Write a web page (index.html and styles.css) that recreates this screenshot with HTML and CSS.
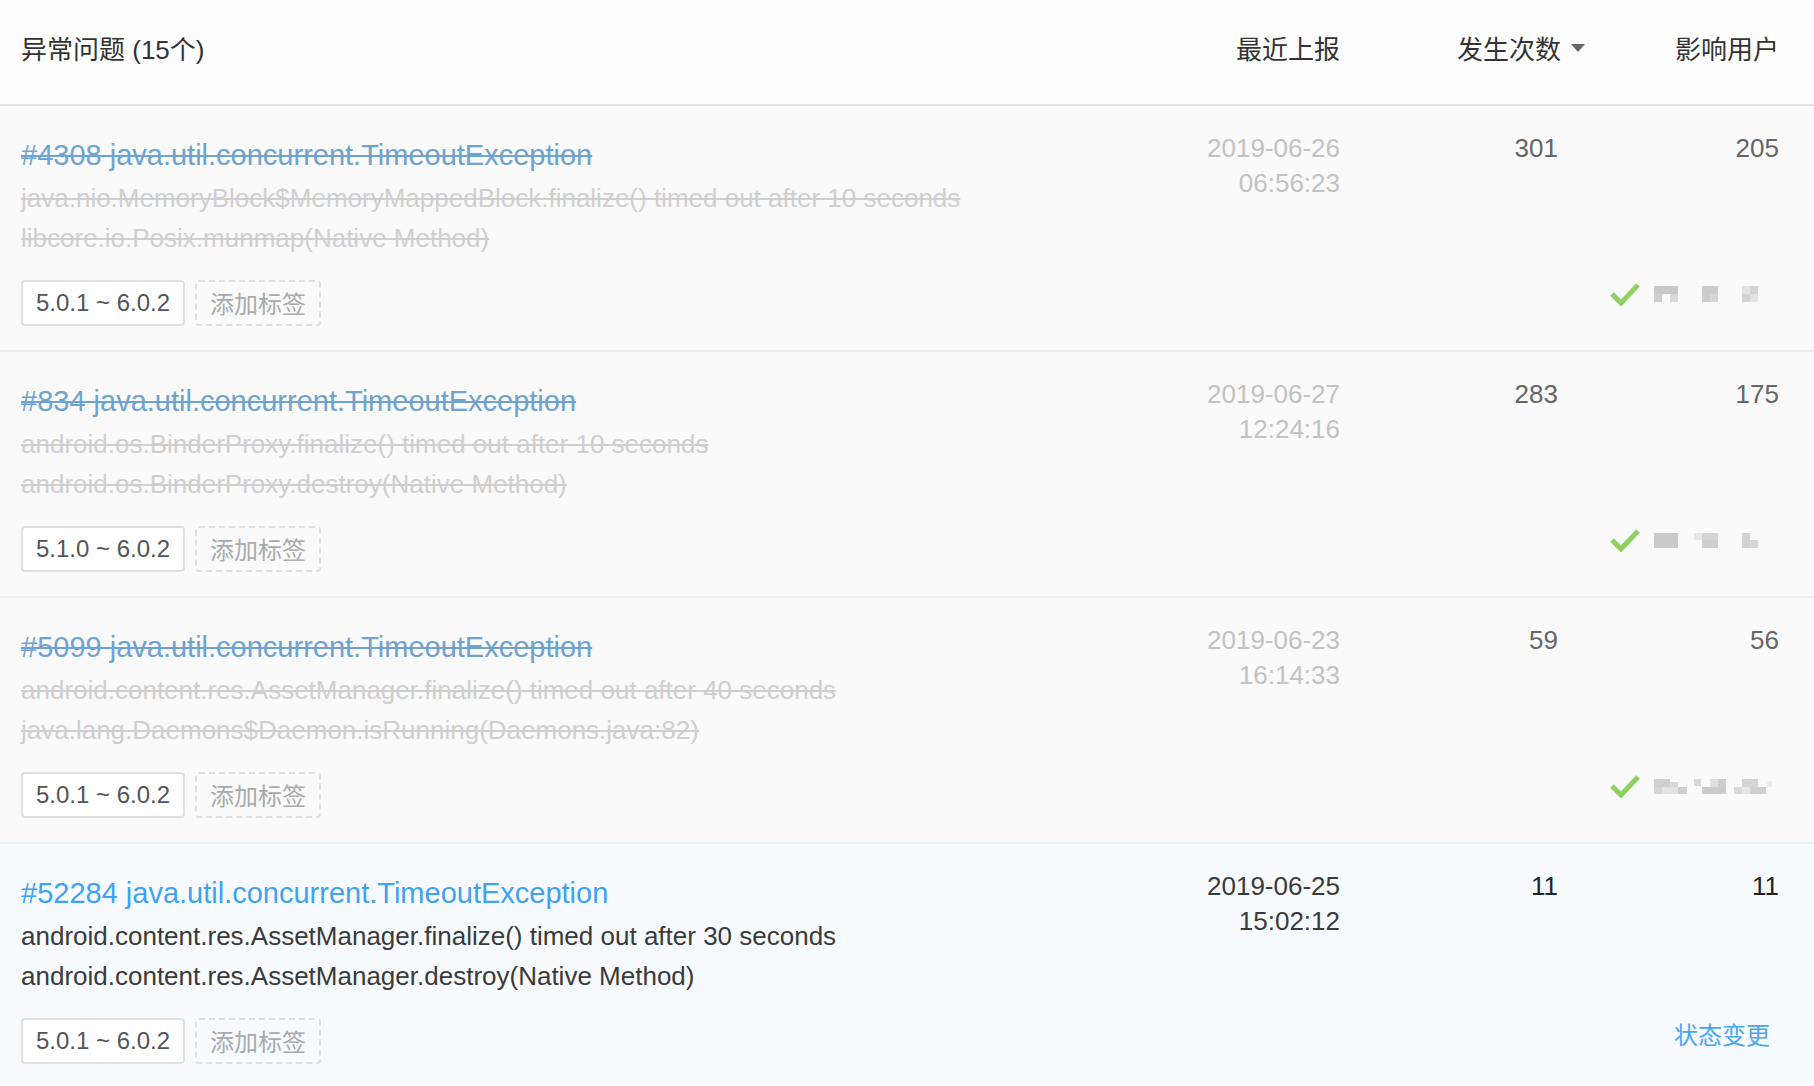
FILE: index.html
```html
<!DOCTYPE html>
<html lang="zh-CN">
<head>
<meta charset="utf-8">
<title>异常问题</title>
<link rel="stylesheet" href="styles.css">
</head>
<body>
<div class="list">
  <div class="head">
    <div class="h-title">异常问题 (15个)</div>
    <div class="h-col">最近上报</div>
    <div class="h-col h-sort">发生次数<span class="caret"></span></div>
    <div class="h-col">影响用户</div>
  </div>

  <div class="row resolved">
    <div class="main">
      <a class="title">#4308 java.util.concurrent.TimeoutException</a>
      <div class="desc">java.nio.MemoryBlock$MemoryMappedBlock.finalize() timed out after 10 seconds<br>libcore.io.Posix.munmap(Native Method)</div>
      <div class="tags"><span class="ver">5.0.1 ~ 6.0.2</span><span class="add">添加标签</span></div>
    </div>
    <div class="date">2019-06-26<br>06:56:23</div>
    <div class="count">301</div>
    <div class="users">
      <div class="num">205</div>
      <div class="ops">
        <svg class="check" width="30" height="24" viewBox="0 0 30 24"><path d="M2 12 L11 21 L28 3" fill="none" stroke="#8fd15f" stroke-width="5"/></svg>
        <svg class="mosaic" width="120" height="18" viewBox="0 0 120 18">
          <rect x="0" y="1" width="24" height="8" fill="#c8c8c8"/><rect x="0" y="9" width="8" height="8" fill="#cdcdcd"/><rect x="16" y="9" width="8" height="8" fill="#d9d9d9"/>
          <rect x="48" y="1" width="16" height="16" fill="#cccccc"/><rect x="56" y="9" width="8" height="8" fill="#d6d6d6"/>
          <rect x="88" y="1" width="16" height="16" fill="#d3d3d3"/><rect x="88" y="1" width="8" height="8" fill="#e2e2e2"/><rect x="96" y="9" width="8" height="8" fill="#e4e4e4"/>
        </svg>
      </div>
    </div>
  </div>

  <div class="row resolved">
    <div class="main">
      <a class="title">#834 java.util.concurrent.TimeoutException</a>
      <div class="desc">android.os.BinderProxy.finalize() timed out after 10 seconds<br>android.os.BinderProxy.destroy(Native Method)</div>
      <div class="tags"><span class="ver">5.1.0 ~ 6.0.2</span><span class="add">添加标签</span></div>
    </div>
    <div class="date">2019-06-27<br>12:24:16</div>
    <div class="count">283</div>
    <div class="users">
      <div class="num">175</div>
      <div class="ops">
        <svg class="check" width="30" height="24" viewBox="0 0 30 24"><path d="M2 12 L11 21 L28 3" fill="none" stroke="#8fd15f" stroke-width="5"/></svg>
        <svg class="mosaic" width="120" height="18" viewBox="0 0 120 18">
          <rect x="0" y="2" width="24" height="15" fill="#cacaca"/>
          <rect x="40" y="2" width="8" height="7" fill="#e6e6e6"/><rect x="48" y="2" width="16" height="7" fill="#d4d4d4"/><rect x="48" y="9" width="16" height="8" fill="#cfcfcf"/>
          <rect x="88" y="2" width="8" height="15" fill="#d2d2d2"/><rect x="96" y="9" width="8" height="8" fill="#d6d6d6"/>
        </svg>
      </div>
    </div>
  </div>

  <div class="row resolved">
    <div class="main">
      <a class="title">#5099 java.util.concurrent.TimeoutException</a>
      <div class="desc">android.content.res.AssetManager.finalize() timed out after 40 seconds<br>java.lang.Daemons$Daemon.isRunning(Daemons.java:82)</div>
      <div class="tags"><span class="ver">5.0.1 ~ 6.0.2</span><span class="add">添加标签</span></div>
    </div>
    <div class="date">2019-06-23<br>16:14:33</div>
    <div class="count">59</div>
    <div class="users">
      <div class="num">56</div>
      <div class="ops">
        <svg class="check" width="30" height="24" viewBox="0 0 30 24"><path d="M2 12 L11 21 L28 3" fill="none" stroke="#8fd15f" stroke-width="5"/></svg>
        <svg class="mosaic" width="120" height="18" viewBox="0 0 120 18">
          <rect x="0" y="2" width="16" height="8" fill="#cfcfcf"/><rect x="16" y="5" width="8" height="5" fill="#d8d8d8"/><rect x="0" y="10" width="8" height="7" fill="#d4d4d4"/><rect x="8" y="10" width="16" height="7" fill="#e3e3e3"/><rect x="24" y="10" width="9" height="7" fill="#cdcdcd"/>
          <rect x="40" y="2" width="7" height="7" fill="#d8d8d8"/><rect x="56" y="2" width="8" height="8" fill="#e0e0e0"/><rect x="48" y="10" width="24" height="7" fill="#cbcbcb"/><rect x="64" y="2" width="8" height="8" fill="#cecece"/>
          <rect x="88" y="2" width="16" height="8" fill="#d5d5d5"/><rect x="80" y="10" width="8" height="7" fill="#d9d9d9"/><rect x="88" y="10" width="8" height="7" fill="#e6e6e6"/><rect x="96" y="10" width="16" height="7" fill="#cfcfcf"/><rect x="112" y="4" width="6" height="6" fill="#eeeeee"/>
        </svg>
      </div>
    </div>
  </div>

  <div class="row active">
    <div class="main">
      <a class="title">#52284 java.util.concurrent.TimeoutException</a>
      <div class="desc">android.content.res.AssetManager.finalize() timed out after 30 seconds<br>android.content.res.AssetManager.destroy(Native Method)</div>
      <div class="tags"><span class="ver">5.0.1 ~ 6.0.2</span><span class="add">添加标签</span></div>
    </div>
    <div class="date">2019-06-25<br>15:02:12</div>
    <div class="count">11</div>
    <div class="users">
      <div class="num">11</div>
      <a class="status">状态变更</a>
    </div>
  </div>
</div>
</body>
</html>
```

FILE: styles.css
```css
html, body {
  margin: 0;
  padding: 0;
  background: #fafafa;
}
body {
  font-family: "Liberation Sans", Arial, "Noto Sans CJK SC", sans-serif;
  font-size: 26px;
  color: #333;
}
.list {
  width: 100%;
}
.head,
.row {
  display: grid;
  grid-template-columns: 1fr 240px 245px 194px;
  padding: 0 35px 0 21px;
}
.head {
  height: 106px;
  align-items: center;
  padding-bottom: 10px;
  box-sizing: border-box;
  background: #fdfdfd;
  border-bottom: 2px solid #e6e6e6;
  color: #333;
}
.h-title {
  font-family: "Liberation Sans", "Noto Sans CJK SC", sans-serif;
}
.h-col {
  text-align: right;
  font-family: "Noto Sans CJK SC", sans-serif;
}
.h-sort {
  display: flex;
  justify-content: flex-end;
  align-items: center;
  gap: 10px;
}
.caret {
  width: 0;
  height: 0;
  border-left: 7px solid transparent;
  border-right: 7px solid transparent;
  border-top: 8px solid #666;
  margin-top: 2px;
}

.row {
  padding-top: 29px;
  padding-bottom: 24px;
  border-bottom: 2px solid #ececec;
  background: #fafafa;
}
.row.active {
  background: #f7fbff;
  border-bottom: none;
}
.main {
  display: flex;
  flex-direction: column;
  align-items: flex-start;
}
.title {
  font-size: 29px;
  line-height: 40px;
  color: #3fa2f2;
}
.desc {
  margin-top: 3px;
  line-height: 40px;
  color: #3a3a3a;
}
.resolved .title {
  color: #6fa3cf;
  text-decoration: line-through;
}
.resolved .desc {
  color: #cfcfcf;
  text-decoration: line-through;
}
.tags {
  display: flex;
  gap: 10px;
  margin-top: 22px;
}
.ver,
.add {
  box-sizing: border-box;
  height: 46px;
  line-height: 42px;
  border-radius: 4px;
}
.ver {
  width: 164px;
  text-align: center;
  background: #fff;
  border: 2px solid #e0e0e0;
  color: #555;
  font-size: 24px;
}
.add {
  width: 126px;
  text-align: center;
  border: 2px dashed #dedede;
  color: #aaa;
  font-family: "Noto Sans CJK SC", sans-serif;
  font-size: 24px;
}
.date {
  text-align: right;
  line-height: 35px;
  margin-top: -4px;
  color: #3a3a3a;
}
.resolved .date {
  color: #c2c2c2;
}
.count {
  text-align: right;
  padding-right: 27px;
  line-height: 35px;
  margin-top: -4px;
  color: #222;
}
.resolved .count,
.resolved .num {
  color: #666;
}
.users {
  display: flex;
  flex-direction: column;
  align-items: flex-end;
}
.num {
  line-height: 35px;
  margin-top: -4px;
  color: #222;
}
.ops {
  margin-top: auto;
  margin-bottom: 20px;
  margin-right: 5px;
  display: flex;
  align-items: center;
  gap: 14px;
}
.check,
.mosaic {
  display: block;
}
.status {
  margin-top: auto;
  margin-bottom: 10px;
  margin-right: 9px;
  line-height: 40px;
  color: #4aa6ef;
  font-family: "Noto Sans CJK SC", sans-serif;
  font-size: 24px;
}
```
